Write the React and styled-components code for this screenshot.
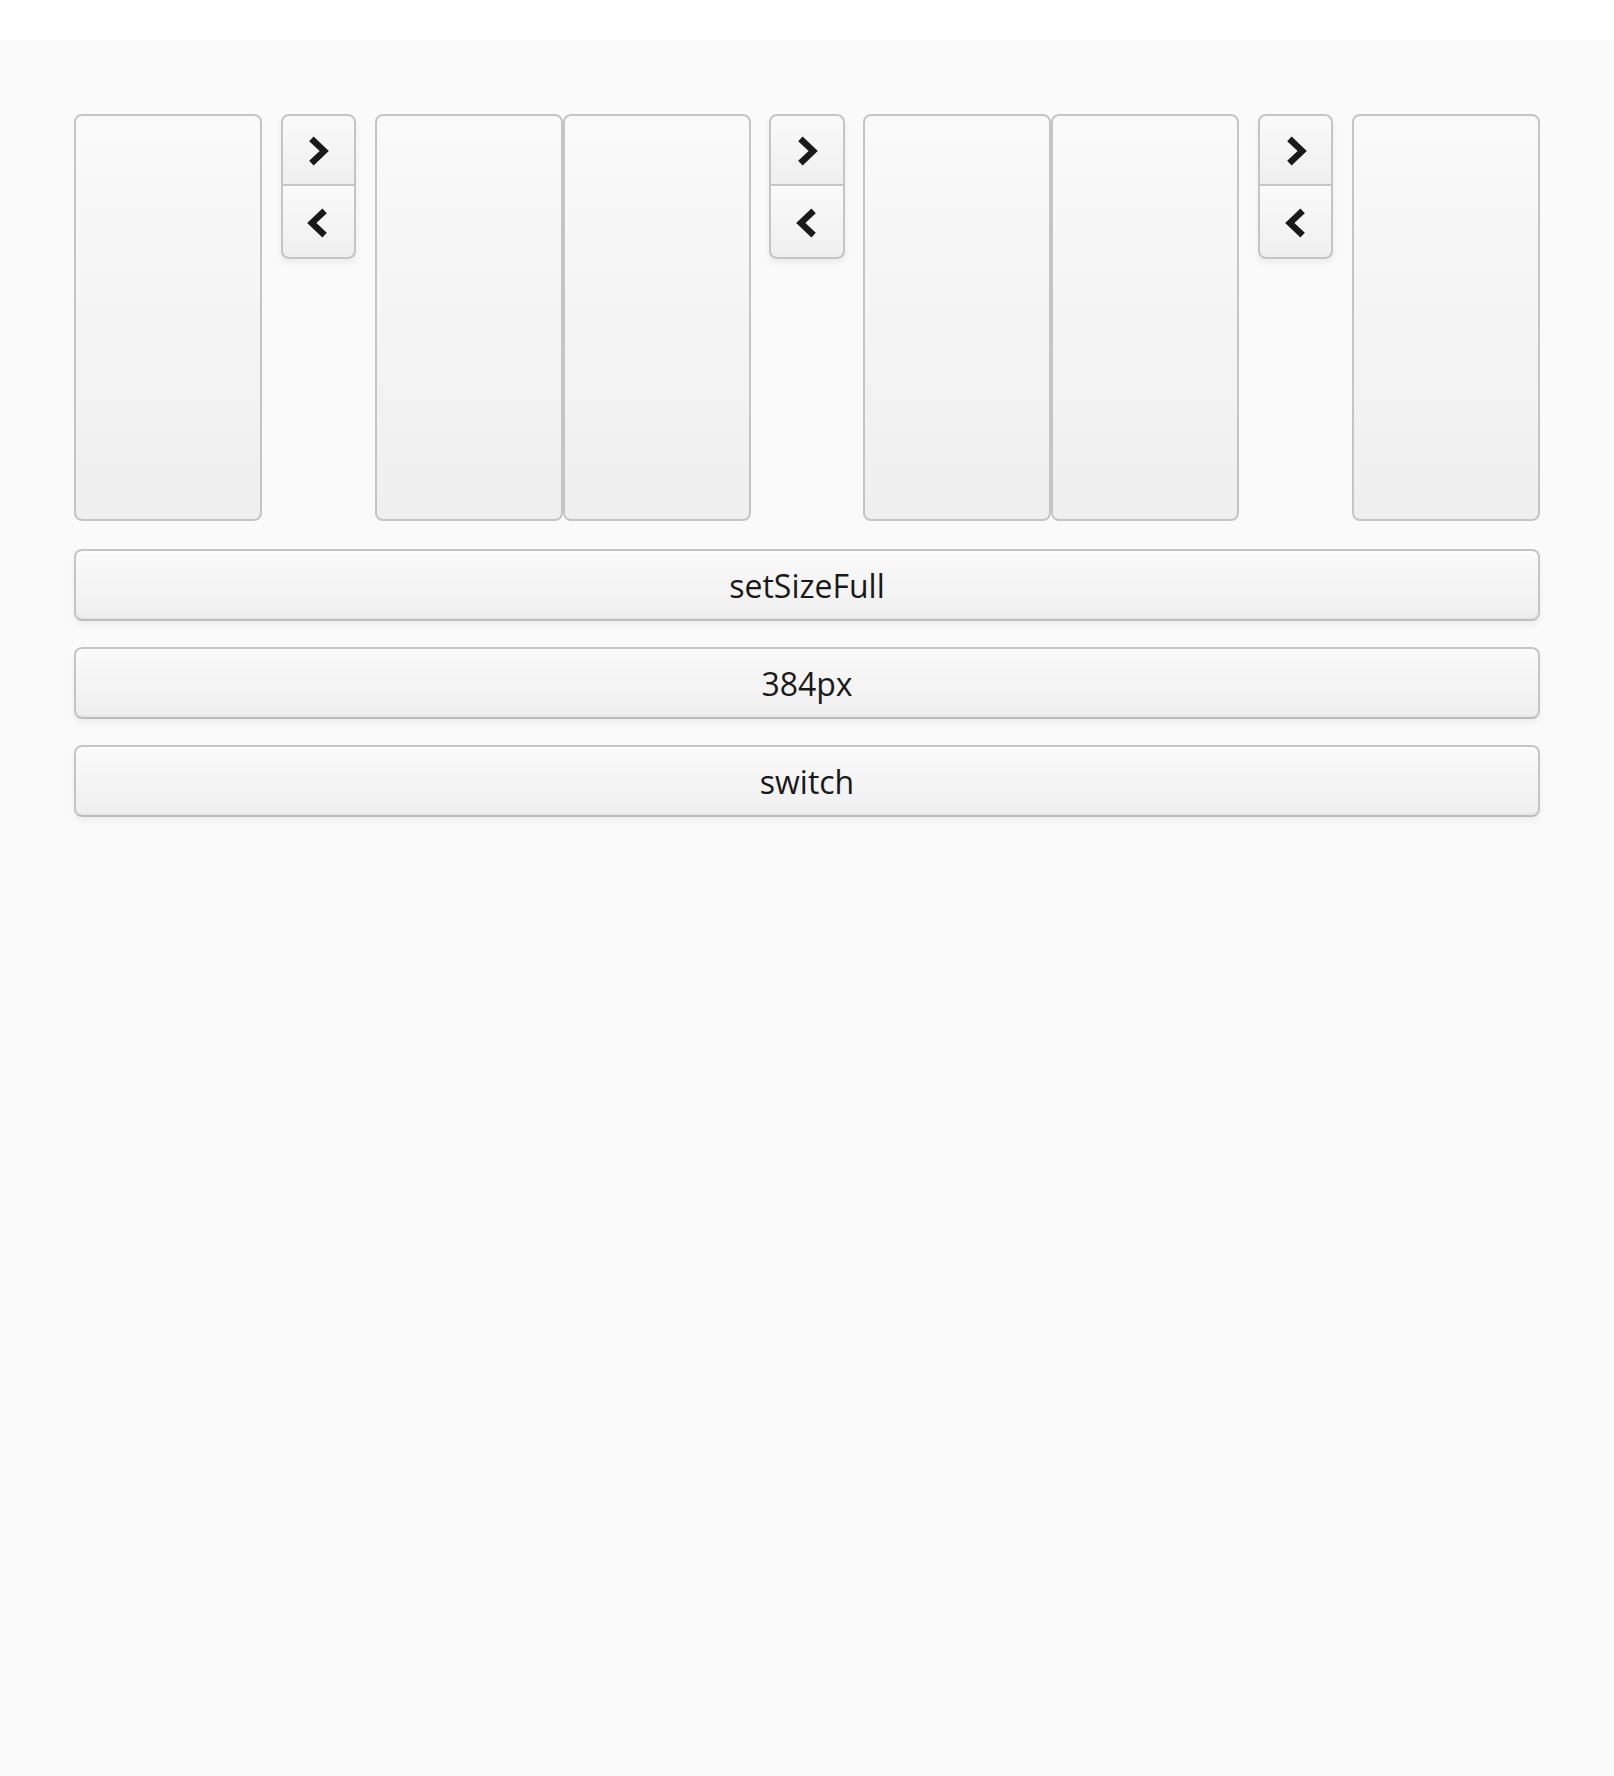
import React from 'react';
import styled, { createGlobalStyle } from 'styled-components';

const GlobalStyle = createGlobalStyle`
  html, body {
    margin: 0;
    padding: 0;
    background: #fafafa;
  }
  body {
    font-family: 'Open Sans', 'Noto Sans', sans-serif;
    color: #191919;
  }
`;

const TopStrip = styled.div`
  height: 40px;
  background: #ffffff;
`;

const Page = styled.div`
  background: #fafafa;
  min-height: 1736px;
  padding: 74px 74px 0;
  box-sizing: border-box;
  display: flex;
  flex-direction: column;
`;

const SelectRow = styled.div`
  display: flex;
  height: 407.3px;
`;

const TwinCol = styled.div`
  flex: 1;
  display: flex;
  justify-content: space-between;
  align-items: flex-start;
`;

const ListBox = styled.div`
  width: 188px;
  height: 100%;
  box-sizing: border-box;
  border: 2px solid #c5c5c5;
  border-radius: 8px;
  background: linear-gradient(to bottom, #fafafa 0%, #efefef 100%);
`;

const ArrowGroup = styled.div`
  width: 75.5px;
  display: flex;
  flex-direction: column;
  border-radius: 8px;
  box-shadow: 0 4px 6px rgba(0, 0, 0, 0.06);
`;

const ArrowButton = styled.div`
  height: 72.3px;
  box-sizing: border-box;
  display: flex;
  align-items: center;
  justify-content: center;
  border: 2px solid #c5c5c5;
  border-top-width: ${(p) => (p.$first ? '2px' : '0')};
  border-radius: ${(p) => (p.$first ? '8px 8px 0 0' : '0 0 8px 8px')};
  padding-top: ${(p) => (p.$first ? '1px' : '3px')};
  background: linear-gradient(to bottom, #fafafa 0%, #efefef 100%);
  box-shadow: ${(p) => (p.$first ? 'none' : 'inset 0 2px 0 #ffffff')};
`;

const Buttons = styled.div`
  display: flex;
  flex-direction: column;
  gap: 25.4px;
  margin-top: 27.4px;
`;

const WideButton = styled.div`
  height: 72.6px;
  box-sizing: border-box;
  border: 2px solid #c5c5c5;
  border-bottom-color: #bcbcbc;
  border-radius: 8px;
  background: linear-gradient(to bottom, #fafafa 0%, #efefef 100%);
  box-shadow: inset 0 2px 0 #fdfdfd, inset 0 -2px 0 #e7e7e7, 0 4px 6px rgba(0, 0, 0, 0.05);
  display: flex;
  align-items: center;
  justify-content: center;
  padding-top: 2px;
  font-family: 'Open Sans', 'Noto Sans', sans-serif;
  font-size: 32px;
  color: #191919;
`;

const Chevron = ({ dir }) => (
  <svg width="22" height="32" viewBox="0 0 20 30" style={{ display: 'block', overflow: 'visible' }}>
    <polyline
      points={dir === 'right' ? '3.8,3.6 15.8,15 3.8,26.4' : '16.2,3.6 4.2,15 16.2,26.4'}
      fill="none"
      stroke="#191919"
      strokeWidth="6"
      strokeLinejoin="miter"
      strokeLinecap="butt"
    />
  </svg>
);

const TwinColSelect = () => (
  <TwinCol>
    <ListBox />
    <ArrowGroup>
      <ArrowButton $first>
        <Chevron dir="right" />
      </ArrowButton>
      <ArrowButton>
        <Chevron dir="left" />
      </ArrowButton>
    </ArrowGroup>
    <ListBox />
  </TwinCol>
);

export default function App() {
  return (
    <>
      <GlobalStyle />
      <TopStrip />
      <Page>
        <SelectRow>
          <TwinColSelect />
          <TwinColSelect />
          <TwinColSelect />
        </SelectRow>
        <Buttons>
          <WideButton>setSizeFull</WideButton>
          <WideButton>384px</WideButton>
          <WideButton>switch</WideButton>
        </Buttons>
      </Page>
    </>
  );
}
